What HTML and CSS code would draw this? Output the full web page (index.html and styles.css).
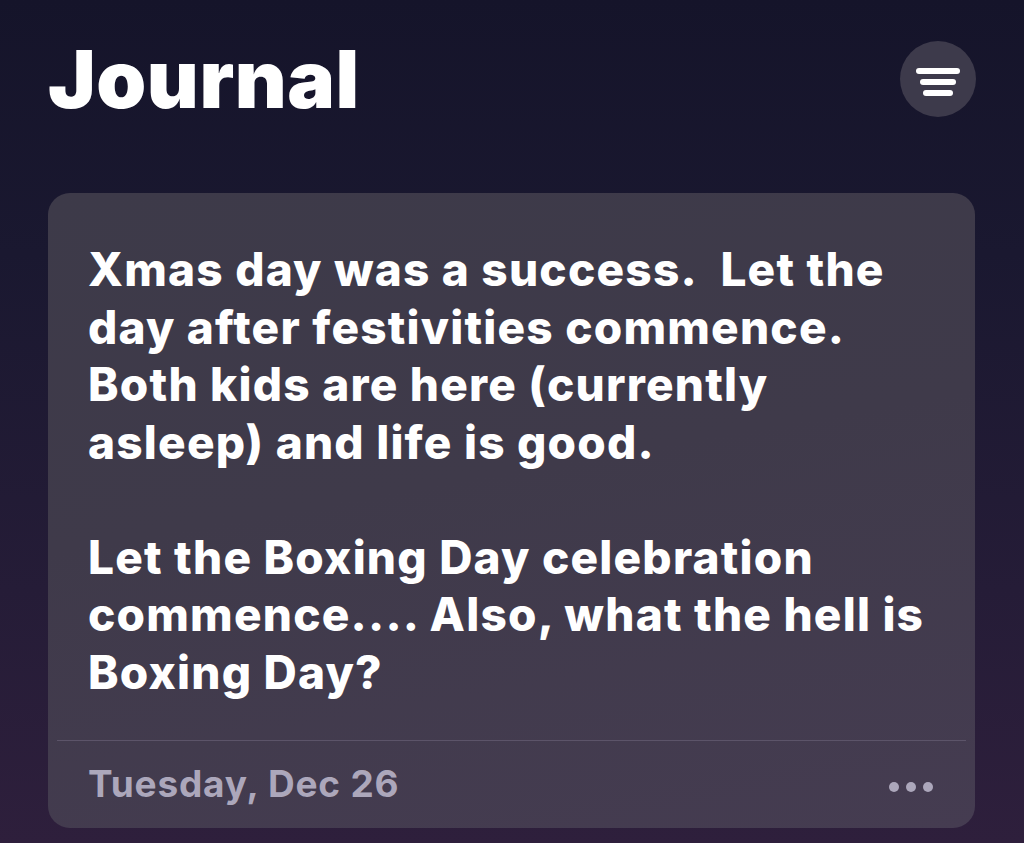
FILE: index.html
```html
<!DOCTYPE html>
<html lang="en">
<head>
<meta charset="utf-8">
<title>Journal</title>
<link rel="stylesheet" href="styles.css">
</head>
<body>
<div class="screen">
  <header class="topbar">
    <h1 class="title">Journal</h1>
    <button class="filter-btn" aria-label="Filter">
      <svg width="76" height="76" viewBox="0 0 76 76">
        <g stroke="#fff" stroke-width="6" stroke-linecap="round">
          <line x1="19" y1="30" x2="57" y2="30"/>
          <line x1="23" y1="41" x2="53" y2="41"/>
          <line x1="26" y1="52" x2="50" y2="52"/>
        </g>
      </svg>
    </button>
  </header>
  <article class="entry">
    <p class="entry-text">Xmas day was a success.&nbsp; Let the<br>day after festivities commence.<br>Both kids are here (currently<br>asleep) and life is good.<br><br>Let the Boxing Day celebration<br>commence.... Also, what the hell is<br>Boxing Day?</p>
    <div class="divider"></div>
    <footer class="entry-footer">
      <span class="entry-date">Tuesday, Dec 26</span>
      <span class="more" aria-label="More"><i></i><i></i><i></i></span>
    </footer>
  </article>
</div>
</body>
</html>
```
FILE: styles.css
```css
* { box-sizing: border-box; }
html, body {
  margin: 0;
  padding: 0;
  height: 100%;
}
body {
  font-family: Inter, "Noto Sans", "Liberation Sans", sans-serif;
  background: linear-gradient(180deg, #15142a 0%, #1a1830 30%, #251c37 70%, #2e1f3c 100%);
  color: #fff;
  overflow: hidden;
}
.screen {
  width: 1024px;
  height: 843px;
  padding: 39px 48px 0 48px;
}
.topbar {
  display: flex;
  justify-content: space-between;
  align-items: flex-start;
  height: 154px;
}
.title {
  margin: 0;
  font-size: 80px;
  line-height: 80px;
  font-weight: 900;
  letter-spacing: 0.6px;
}
.filter-btn {
  margin-top: 2px;
  width: 76px;
  height: 76px;
  border-radius: 50%;
  border: 0;
  padding: 0;
  background: #3d3a4b;
  display: flex;
  align-items: center;
  justify-content: center;
}
.filter-btn svg { display: block; }
.entry {
  width: 927px;
  height: 635px;
  border-radius: 22px;
  background: linear-gradient(170deg, #3d3a49 0%, #3f3a4a 45%, #453c51 100%);
  padding: 48px 9px 0 9px;
  display: flex;
  flex-direction: column;
}
.entry-text {
  margin: 0;
  padding: 0 31px;
  font-size: 46px;
  line-height: 57.5px;
  font-weight: 800;
  letter-spacing: 1.2px;
  color: #fff;
  height: 460px;
}
.divider {
  margin-top: 39px;
  height: 1px;
  background: #5c5469;
}
.entry-footer {
  display: flex;
  justify-content: space-between;
  align-items: center;
  padding: 24px 33px 0 31px;
}
.entry-date {
  font-size: 37px;
  line-height: 37px;
  font-weight: 700;
  letter-spacing: 0.8px;
  color: #aca7bb;
}
.more {
  display: flex;
  gap: 7px;
  padding-top: 6px;
}
.more i {
  display: block;
  width: 10px;
  height: 10px;
  border-radius: 50%;
  background: #aca7bb;
}
```
